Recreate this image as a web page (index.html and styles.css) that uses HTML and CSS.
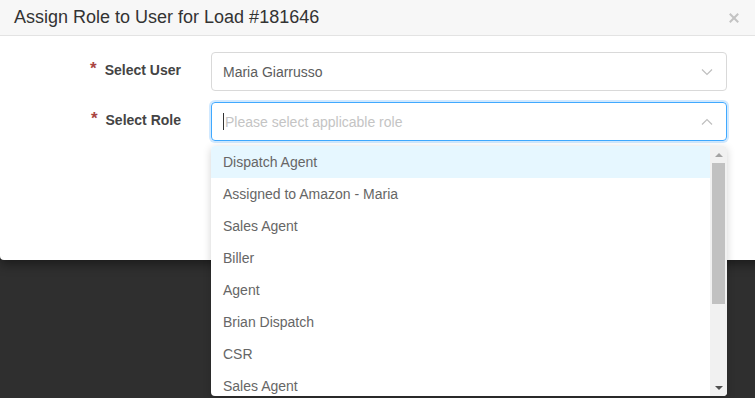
FILE: index.html
```html
<!DOCTYPE html>
<html lang="en">
<head>
  <meta charset="UTF-8">
  <meta name="viewport" content="width=device-width, initial-scale=1.0">
  <title>Assign Role</title>
  <link rel="stylesheet" href="styles.css">
</head>
<body>
  <div class="modal">
    <div class="modal-header">
      <div class="modal-title">Assign Role to User for Load #181646</div>
      <button class="modal-close">
        <svg width="10" height="10" viewBox="0 0 10 10" stroke="currentColor" stroke-width="2" stroke-linecap="square">
          <line x1="1.5" y1="1.5" x2="8.5" y2="8.5"></line>
          <line x1="8.5" y1="1.5" x2="1.5" y2="8.5"></line>
        </svg>
      </button>
    </div>
    <div class="modal-body">
      <div class="form-row">
        <label class="form-label"><span class="required">*</span>Select User</label>
        <div class="select">
          <span class="select-value">Maria Giarrusso</span>
          <svg class="select-arrow" width="12" height="8" viewBox="0 0 12 8" fill="none" stroke="currentColor" stroke-width="1.2">
            <polyline points="1 1.5 6 6.5 11 1.5"></polyline>
          </svg>
        </div>
      </div>
      <div class="form-row">
        <label class="form-label"><span class="required">*</span>Select Role</label>
        <div class="select-wrap">
          <div class="select focused">
            <span class="caret"></span>
            <span class="select-placeholder">Please select applicable role</span>
            <svg class="select-arrow" width="12" height="8" viewBox="0 0 12 8" fill="none" stroke="currentColor" stroke-width="1.2">
              <polyline points="1 6.5 6 1.5 11 6.5"></polyline>
            </svg>
          </div>
          <div class="dropdown">
            <ul class="dropdown-list">
              <li class="active">Dispatch Agent</li>
              <li>Assigned to Amazon - Maria</li>
              <li>Sales Agent</li>
              <li>Biller</li>
              <li>Agent</li>
              <li>Brian Dispatch</li>
              <li>CSR</li>
              <li>Sales Agent</li>
            </ul>
            <div class="scrollbar">
              <span class="scroll-btn up"></span>
              <div class="scroll-track"><div class="scroll-thumb"></div></div>
              <span class="scroll-btn down"></span>
            </div>
          </div>
        </div>
      </div>
    </div>
  </div>
</body>
</html>
```

FILE: styles.css
```css
body, html {
  margin: 0;
  padding: 0;
  height: 100%;
  overflow: hidden;
  background-color: #2f2f2f;
  font-family: "Liberation Sans", Arial, sans-serif;
}
.modal {
  width: 780px;
  height: 260px;
  background-color: #fff;
  border-radius: 0 0 4px 4px;
  box-shadow: 0 4px 12px rgba(0,0,0,0.45);
}
.modal-header {
  height: 36px;
  box-sizing: border-box;
  background-color: #f7f7f7;
  border-bottom: 1px solid #e3e3e3;
  display: flex;
  align-items: center;
  padding: 0 0 0 14px;
  width: 755px;
}
.modal-title {
  flex: 1;
  font-size: 18px;
  color: #333;
  padding-bottom: 1px;
}
.modal-close {
  background: none;
  border: none;
  color: #c3c3c3;
  padding: 0;
  width: 20px;
  margin-right: 11px;
  margin-top: 1px;
  display: flex;
  align-items: center;
  justify-content: center;
}
.modal-body {
  padding-top: 16px;
  width: 727px;
}
.form-row {
  display: flex;
  margin-bottom: 11px;
}
.form-label {
  width: 181px;
  margin-right: 30px;
  display: flex;
  justify-content: flex-end;
  font-size: 14px;
  font-weight: bold;
  color: #444;
  padding-top: 10px;
  line-height: 16px;
  height: 20px;
}
.required {
  color: #a94442;
  font-size: 17px;
  margin-right: 8px;
  margin-top: -1px;
}
.select-wrap {
  flex: 1;
  position: relative;
}
.select {
  flex: 1;
  height: 39px;
  box-sizing: border-box;
  border: 1px solid #d9d9d9;
  border-radius: 4px;
  display: flex;
  align-items: center;
  padding: 0 11px;
  font-size: 14px;
}
.select.focused {
  border-color: #40a9ff;
  box-shadow: 0 0 0 2px rgba(24,144,255,0.2);
}
.select-value {
  flex: 1;
  color: #5c5c5c;
}
.select-placeholder {
  flex: 1;
  color: #c4c4c4;
}
.caret {
  width: 1px;
  height: 17px;
  background-color: #333;
  margin-right: 1px;
}
.select-arrow {
  color: #bfbfbf;
  margin-right: 2px;
}
.dropdown {
  position: absolute;
  top: 44px;
  left: 0;
  right: 0;
  height: 250px;
  background-color: #fff;
  border-radius: 4px;
  box-shadow: 0 2px 8px rgba(0,0,0,0.18);
  display: flex;
  overflow: hidden;
}
.dropdown-list {
  flex: 1;
  list-style: none;
  margin: 0;
  padding: 0;
}
.dropdown-list li {
  height: 32px;
  line-height: 32px;
  padding: 0 12px;
  font-size: 14px;
  color: #666;
}
.dropdown-list li.active {
  background-color: #e6f7ff;
}
.scrollbar {
  width: 17px;
  background-color: #f1f1f1;
  display: flex;
  flex-direction: column;
  align-items: center;
}
.scroll-btn {
  height: 17px;
  width: 17px;
  display: flex;
  align-items: center;
  justify-content: center;
}
.scroll-btn::before {
  content: "";
  border-left: 4px solid transparent;
  border-right: 4px solid transparent;
}
.scroll-btn.up::before {
  border-bottom: 4px solid #a3a3a3;
}
.scroll-btn.down::before {
  border-top: 4px solid #505050;
}
.scroll-track {
  flex: 1;
  width: 100%;
  display: flex;
  justify-content: center;
}
.scroll-thumb {
  width: 13px;
  height: 141px;
  background-color: #c1c1c1;
}
```
